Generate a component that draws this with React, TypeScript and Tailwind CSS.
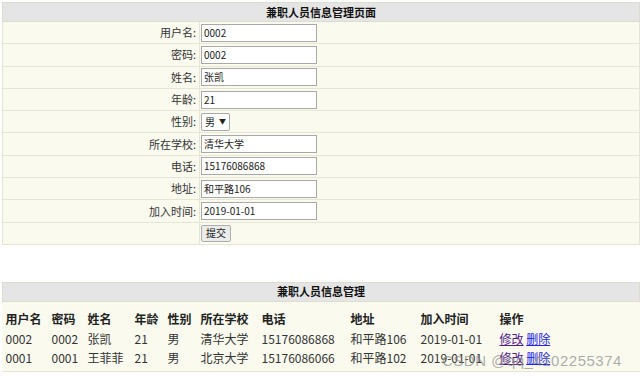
import React from 'react';

const fields = [
  { label: '用户名:', value: '0002' },
  { label: '密码:', value: '0002' },
  { label: '姓名:', value: '张凯' },
  { label: '年龄:', value: '21' },
  { label: '性别:', value: 'select' },
  { label: '所在学校:', value: '清华大学' },
  { label: '电话:', value: '15176086868' },
  { label: '地址:', value: '和平路106' },
  { label: '加入时间:', value: '2019-01-01' },
];

const cols = [
  { name: '用户名', w: 'w-[46px]' },
  { name: '密码', w: 'w-[36px]' },
  { name: '姓名', w: 'w-[47px]' },
  { name: '年龄', w: 'w-[33px]' },
  { name: '性别', w: 'w-[33px]' },
  { name: '所在学校', w: 'w-[61px]' },
  { name: '电话', w: 'w-[89px]' },
  { name: '地址', w: 'w-[70px]' },
  { name: '加入时间', w: 'w-[79px]' },
  { name: '操作', w: '' },
];

const rows = [
  ['0002', '0002', '张凯', '21', '男', '清华大学', '15176086868', '和平路106', '2019-01-01'],
  ['0001', '0001', '王菲菲', '21', '男', '北京大学', '15176086066', '和平路102', '2019-01-01'],
];

export default function App() {
  return (
    <div className="relative w-[642px] h-[377px] bg-white overflow-hidden font-['Noto_Sans_CJK_SC','Liberation_Sans',sans-serif] text-[#222]">
      <div className="pt-[2px] px-[2px]">
        <table className="w-[638px] border-collapse text-[11px] bg-[#fafaef]">
          <thead>
            <tr className="h-[19px] bg-[#e5e5e5]">
              <th colSpan={2} className="border border-[#dcdcd0] font-bold text-[11px] text-[#111] text-center leading-none">
                兼职人员信息管理页面
              </th>
            </tr>
          </thead>
          <tbody>
            {fields.map((f) => (
              <tr key={f.label} className="h-[22.3px]">
                <td className="w-[197px] border border-[#e6e6d6] text-right pr-[3px] text-[#333] leading-none">{f.label}</td>
                <td className="border border-[#e6e6d6] pl-[1px] leading-none">
                  {f.value === 'select' ? (
                    <span className="inline-flex items-center gap-[4px] h-[18px] px-[3px] bg-white border border-[#a9a9a9] rounded-[2px] text-[10px]">
                      男<span className="text-[7px]">▼</span>
                    </span>
                  ) : (
                    <span className="flex items-center w-[116px] h-[18px] bg-white border border-[#a9a9a9] px-[2px] text-[10px] text-[#222]">
                      {f.value}
                    </span>
                  )}
                </td>
              </tr>
            ))}
            <tr className="h-[22px]">
              <td className="border border-[#e6e6d6]"></td>
              <td className="border border-[#e6e6d6] pl-[1px] leading-none">
                <span className="inline-flex items-center h-[17px] px-[4px] bg-[#ebebeb] border border-[#adadad] rounded-[2px] text-[10px]">
                  提交
                </span>
              </td>
            </tr>
          </tbody>
        </table>
      </div>

      <div className="mt-[37px] px-[2px]">
        <table className="w-[638px] border-collapse bg-[#fafaef]">
          <thead>
            <tr className="h-[19px] bg-[#e5e5e5]">
              <th colSpan={10} className="border border-[#dcdcd0] font-bold text-[11px] text-[#111] text-center leading-none">
                兼职人员信息管理
              </th>
            </tr>
          </thead>
          <tbody className="text-[12px]">
            <tr className="h-[7px]">
              <td colSpan={10}></td>
            </tr>
            <tr className="h-[21px]">
              {cols.map((c) => (
                <td key={c.name} className={`${c.w} pl-[3px] font-bold text-[12px] leading-none`}>
                  {c.name}
                </td>
              ))}
            </tr>
            {rows.map((r, i) => (
              <tr key={i} className="h-[19.5px]">
                {r.map((v, j) => (
                  <td key={j} className="pl-[3px] text-[#333] leading-none">{v}</td>
                ))}
                <td className="pl-[3px] leading-none">
                  <span className="text-[#551a8b] underline">修改</span>{' '}
                  <span className="text-[#2222ee] underline">删除</span>
                </td>
              </tr>
            ))}
            <tr className="h-[3px] border-b border-[#e6e6d6]">
              <td colSpan={10}></td>
            </tr>
          </tbody>
        </table>
      </div>

      <div className="absolute left-[442px] top-[350px] text-[15px] text-[#8a8a8a]/70 font-['Liberation_Sans',sans-serif] tracking-[0.5px]">
        CSDN @qq_4102255374
      </div>
    </div>
  );
}
